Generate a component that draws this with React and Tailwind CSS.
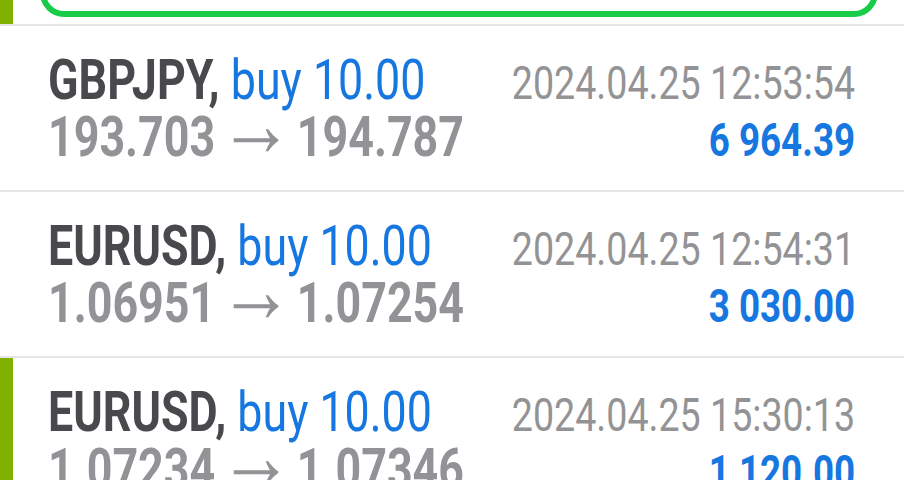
import React from "react";

const trades = [
  {
    symbol: "GBPJPY",
    side: "buy 10.00",
    open: "193.703",
    close: "194.787",
    time: "2024.04.25 12:53:54",
    profit: "6 964.39",
    marked: false,
  },
  {
    symbol: "EURUSD",
    side: "buy 10.00",
    open: "1.06951",
    close: "1.07254",
    time: "2024.04.25 12:54:31",
    profit: "3 030.00",
    marked: false,
  },
  {
    symbol: "EURUSD",
    side: "buy 10.00",
    open: "1.07234",
    close: "1.07346",
    time: "2024.04.25 15:30:13",
    profit: "1 120.00",
    marked: true,
  },
];

const TradeRow = ({ t }) => (
  <div className="flex h-[166px] border-t-2 border-[#e6e6e6]">
    <div className={`w-[13px] shrink-0 ${t.marked ? "bg-[#80b100]" : ""}`} />
    <div className="flex-1 pl-[35px] pr-[49px] pt-[26px]">
      <div className="flex items-baseline justify-between h-[57px] leading-[57px]">
        <div className="w-[420px]">
          <span className="inline-block origin-left scale-x-[0.8] whitespace-nowrap text-[56px]">
            <span className="font-bold text-[#48484d]">{t.symbol},</span>{" "}
            <span className="text-[#1677e0]">{t.side}</span>
          </span>
        </div>
        <div className="flex w-[360px] justify-end">
          <span className="inline-block origin-right scale-x-[0.8] whitespace-nowrap text-[47px] text-[#939395]">
            {t.time}
          </span>
        </div>
      </div>
      <div className="flex items-baseline justify-between h-[57px] leading-[57px]">
        <div className="w-[420px]">
          <span className="inline-block origin-left scale-x-[0.8] whitespace-nowrap text-[56px] font-bold text-[#939397]">
            {t.open}
            <span className="mx-[4px] inline-block leading-[0] text-[94px] font-normal">→</span>
            {t.close}
          </span>
        </div>
        <div className="flex w-[360px] justify-end">
          <span className="inline-block origin-right scale-x-[0.8] whitespace-nowrap text-[46px] font-bold text-[#1677e0]">
            {t.profit}
          </span>
        </div>
      </div>
    </div>
  </div>
);

export default function App() {
  return (
    <div
      className="h-[480px] w-[904px] overflow-hidden bg-white"
      style={{ fontFamily: "Roboto, 'Liberation Sans', sans-serif" }}
    >
      <div className="flex h-[24px] overflow-hidden">
        <div className="w-[13px] shrink-0 bg-[#80b100]" />
        <div className="flex-1 pl-[27px] pr-[26px]">
          <div className="-mt-[60px] h-[77px] rounded-[24px] border-[6px] border-[#18cb48]" />
        </div>
      </div>
      {trades.map((t, i) => (
        <TradeRow key={i} t={t} />
      ))}
    </div>
  );
}
